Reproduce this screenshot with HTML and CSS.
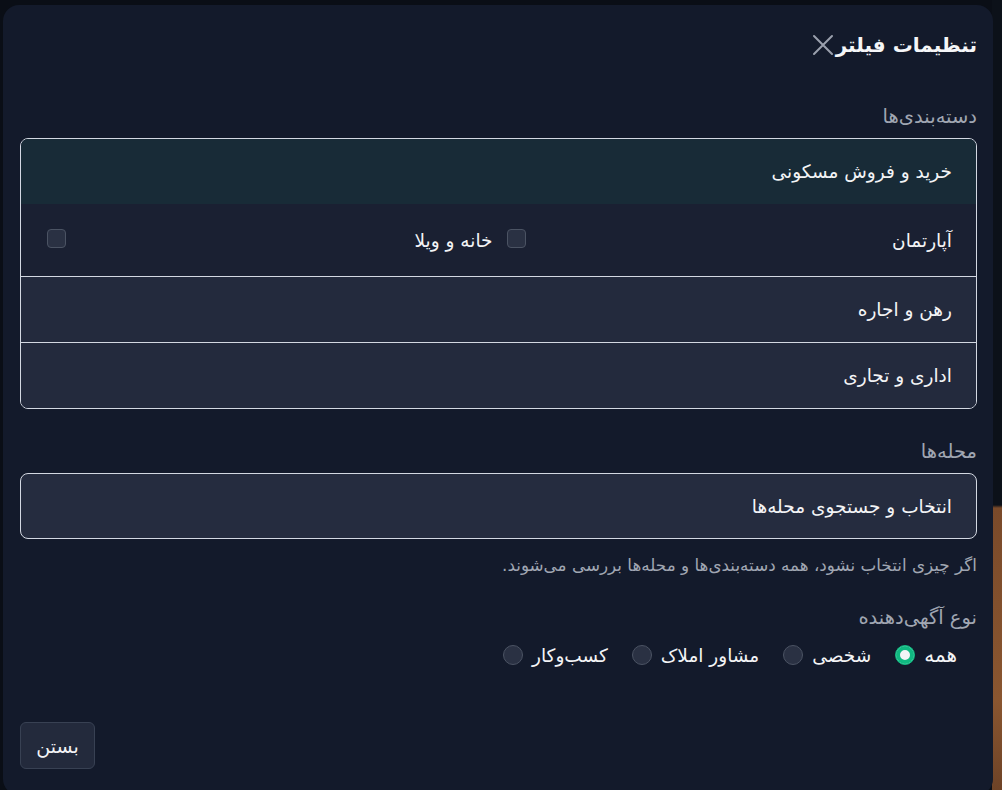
FILE: index.html
```html
<!DOCTYPE html>
<html lang="fa" dir="rtl">
<head>
<meta charset="utf-8">
<title>تنظیمات فیلتر</title>
<link rel="stylesheet" href="styles.css">
</head>
<body>
<div class="page">
  <div class="page-strip"></div>
</div>
<div class="modal">
  <div class="modal-head">
    <h2 class="modal-title">تنظیمات فیلتر</h2>
    <button class="close-btn" aria-label="بستن">
      <svg width="22" height="22" viewBox="0 0 22 22"><path d="M2 2 L20 20 M20 2 L2 20" stroke="#9aa0ad" stroke-width="2" stroke-linecap="round" fill="none"/></svg>
    </button>
  </div>

  <div class="section">
    <div class="label">دسته‌بندی‌ها</div>
    <div class="cat-list">
      <div class="cat-group">
        <div class="cat-head">خرید و فروش مسکونی</div>
        <div class="cat-subs">
          <label class="sub-item"><span>آپارتمان</span><span class="check"></span></label>
          <label class="sub-item"><span>خانه و ویلا</span><span class="check"></span></label>
        </div>
      </div>
      <div class="cat-row">رهن و اجاره</div>
      <div class="cat-row">اداری و تجاری</div>
    </div>
  </div>

  <div class="section sec-hood">
    <div class="label">محله‌ها</div>
    <div class="hood-input">انتخاب و جستجوی محله‌ها</div>
    <div class="hint">اگر چیزی انتخاب نشود، همه دسته‌بندی‌ها و محله‌ها بررسی می‌شوند.</div>
  </div>

  <div class="section sec-type">
    <div class="label">نوع آگهی‌دهنده</div>
    <div class="radios">
      <label class="radio-item"><span>همه</span><span class="radio on"></span></label>
      <label class="radio-item"><span>شخصی</span><span class="radio"></span></label>
      <label class="radio-item"><span>مشاور املاک</span><span class="radio"></span></label>
      <label class="radio-item"><span>کسب‌وکار</span><span class="radio"></span></label>
    </div>
  </div>

  <div class="modal-foot">
    <button class="close-text">بستن</button>
  </div>
</div>
</body>
</html>
```

FILE: styles.css
```css
* { box-sizing: border-box; }
html, body {
  margin: 0;
  height: 100%;
  overflow: hidden;
}
body {
  background: #0a0e16;
  font-family: "DejaVu Sans", "Noto Sans", sans-serif;
  color: #f1f3f7;
}
.page {
  height: 100%;
  display: flex;
  justify-content: flex-start;
}
.page-strip {
  width: 10px;
  height: 100%;
  background: linear-gradient(to bottom, #0c1119 0, #0c1119 505px, #7a4a2a 508px, #8a5630 700px, #6e4327 790px);
}
.modal {
  position: absolute;
  left: 3px;
  top: 5px;
  width: 990px;
  height: 790px;
  background: #131a2b;
  border-radius: 16px;
  padding: 25px 16px 0 17px;
  display: flex;
  flex-direction: column;
}
.modal-head {
  display: flex;
  align-items: center;
  gap: 1px;
  height: 30px;
}
.modal-title {
  margin: 0;
  font-size: 20px;
  font-weight: bold;
  color: #f5f6f8;
}
.close-btn {
  background: none;
  border: 0;
  padding: 0;
  width: 24px;
  height: 24px;
  display: flex;
  align-items: center;
  justify-content: center;
}
.section {
  margin-top: 45px;
}
.label {
  font-size: 19.5px;
  color: #a0a6b2;
  line-height: 24px;
  margin-bottom: 9px;
}
.cat-list {
  border: 1px solid #d3d8e2;
  border-radius: 8px;
  overflow: hidden;
}
.cat-head {
  height: 65px;
  background: #182b37;
  display: flex;
  align-items: center;
  padding: 0 24px;
  font-size: 18.5px;
  color: #f3f4f6;
}
.cat-subs {
  height: 72px;
  background: #1a2032;
  display: grid;
  grid-template-columns: 1fr 1fr;
  column-gap: 12px;
  padding: 0 24px;
  align-items: center;
}
.sub-item {
  display: flex;
  justify-content: space-between;
  align-items: center;
  font-size: 18.5px;
  color: #f3f4f6;
}
.sub-item .check {
  width: 19px;
  height: 19px;
  border: 1px solid #4b5363;
  background: #2a3143;
  border-radius: 4px;
  margin-left: 2px;
  margin-bottom: 4px;
}
.cat-row {
  height: 66px;
  background: #232a3d;
  border-top: 1px solid #d3d8e2;
  display: flex;
  align-items: center;
  padding: 0 24px;
  font-size: 18.5px;
  color: #f3f4f6;
}
.sec-hood {
  margin-top: 31px;
}
.hood-input {
  height: 66px;
  border: 1px solid #d3d8e2;
  border-radius: 8px;
  background: #252c3f;
  display: flex;
  align-items: center;
  padding: 0 24px;
  font-size: 18.5px;
  color: #f3f4f6;
}
.hint {
  margin-top: 15px;
  font-size: 16.8px;
  line-height: 22px;
  color: #a0a6b2;
}
.sec-type {
  margin-top: 30px;
}
.sec-type .label {
  margin-bottom: 13px;
}
.radios {
  display: flex;
  gap: 24px;
  padding-right: 20px;
  height: 24px;
}
.radio-item {
  display: flex;
  align-items: center;
  gap: 9px;
  font-size: 18.5px;
  color: #f3f4f6;
}
.radio-item:first-child span:first-child {
  font-size: 20px;
}
.radio {
  width: 20px;
  height: 20px;
  border-radius: 50%;
  border: 1px solid #4b5363;
  background: #2a3143;
}
.radio.on {
  background: #10b981;
  border-color: #10b981;
  box-shadow: inset 0 0 0 4px #10b981, inset 0 0 0 10px #f3f4f6;
}
.modal-foot {
  margin-top: auto;
  margin-bottom: 26px;
  display: flex;
  justify-content: flex-end;
}
.close-text {
  font-family: inherit;
  font-size: 19px;
  color: #f3f4f6;
  background: #232a3c;
  border: 1px solid #384153;
  border-radius: 6px;
  width: 75px;
  height: 47px;
}
```
